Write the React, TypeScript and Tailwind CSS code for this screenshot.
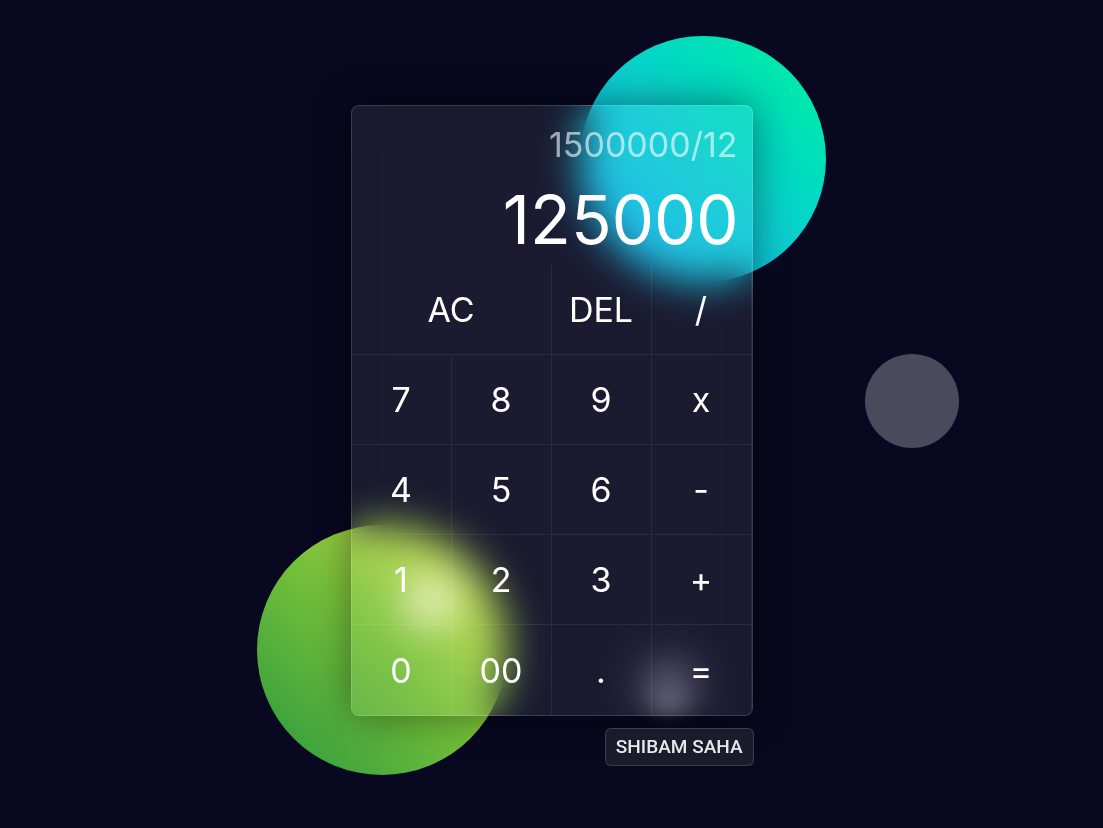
const keys: { label: string; wide?: boolean }[] = [
  { label: 'AC', wide: true },
  { label: 'DEL' },
  { label: '/' },
  { label: '7' },
  { label: '8' },
  { label: '9' },
  { label: 'x' },
  { label: '4' },
  { label: '5' },
  { label: '6' },
  { label: '-' },
  { label: '1' },
  { label: '2' },
  { label: '3' },
  { label: '+' },
  { label: '0' },
  { label: '00' },
  { label: '.' },
  { label: '=' },
];

export default function App() {
  return (
    <div
      className="min-h-screen w-full bg-[#080820] flex justify-center pt-[105px] overflow-hidden"
      style={{ fontFamily: 'Inter, "Noto Sans", sans-serif' }}
    >
      <div className="relative flex flex-col items-end">
        {/* background blobs */}
        <div className="absolute left-[229px] top-[-69px] w-[246px] h-[246px] rounded-full bg-linear-to-tr from-[#1aa8f2] via-[#0ccfd0] to-[#00f29a]" />
        <div className="absolute left-[-94px] top-[420px] w-[250px] h-[250px] rounded-full bg-linear-to-tr from-[#1c983c] via-[#74c03a] to-[#dce44a]" />
        <div className="absolute left-[54px] top-[470px] w-[52px] h-[52px] rounded-full bg-[#eef2c8]" />
        <div className="absolute left-[514px] top-[249px] w-[94px] h-[94px] rounded-full bg-[#4a4a5c]" />
        <div className="absolute left-[296px] top-[560px] w-[44px] h-[44px] rounded-full bg-[#8a8a9e] blur-[10px]" />

        <div className="relative w-[402px] h-[611px] rounded-lg border border-white/15 bg-[#ffffff13] backdrop-blur-[20px] shadow-[0_0_40px_rgba(0,0,0,0.45)] overflow-hidden flex flex-col">
          <div className="h-[160px] flex flex-col items-end pt-[22px] pr-[13px]">
            <div className="text-[34px] leading-none text-white/60 mr-[1px]">1500000/12</div>
            <div className="mt-[24px] text-[67px] leading-none text-white">125000</div>
          </div>
          <div className="grid grid-cols-4">
            {keys.map((k, i) => (
              <button
                key={i}
                className={`h-[90px] flex items-center justify-center text-[34px] text-white border-white/[0.07] border-r ${
                  i < keys.length - 4 ? 'border-b' : ''
                } ${k.wide ? 'col-span-2' : ''}`}
              >
                {k.label}
              </button>
            ))}
          </div>
        </div>

        <div
          className="relative mt-3 mr-[-1px] px-[10px] h-[38px] flex items-center rounded-md border border-white/15 bg-[#1b1b2c] text-[19px] font-medium text-white/90"
          style={{ fontFamily: 'Roboto, sans-serif' }}
        >
          SHIBAM SAHA
        </div>
      </div>
    </div>
  );
}
